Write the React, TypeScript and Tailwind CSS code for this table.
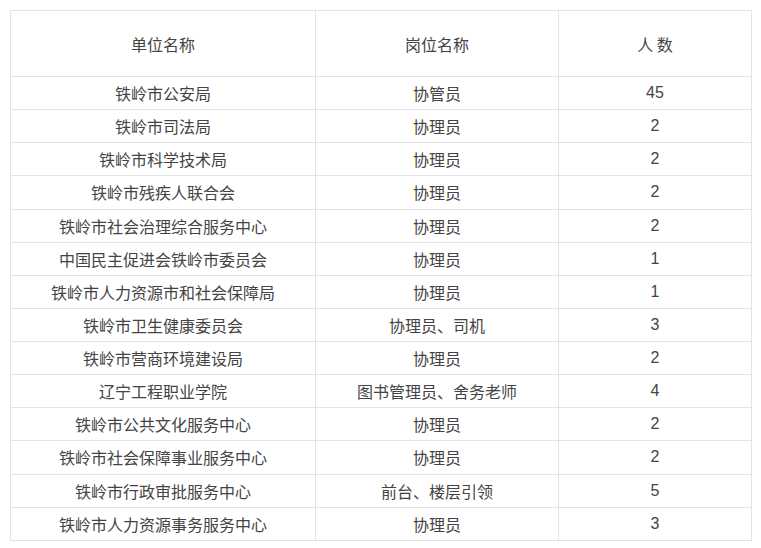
import React from 'react'

const rows: [string, string, string][] = [
  ['铁岭市公安局', '协管员', '45'],
  ['铁岭市司法局', '协理员', '2'],
  ['铁岭市科学技术局', '协理员', '2'],
  ['铁岭市残疾人联合会', '协理员', '2'],
  ['铁岭市社会治理综合服务中心', '协理员', '2'],
  ['中国民主促进会铁岭市委员会', '协理员', '1'],
  ['铁岭市人力资源市和社会保障局', '协理员', '1'],
  ['铁岭市卫生健康委员会', '协理员、司机', '3'],
  ['铁岭市营商环境建设局', '协理员', '2'],
  ['辽宁工程职业学院', '图书管理员、舍务老师', '4'],
  ['铁岭市公共文化服务中心', '协理员', '2'],
  ['铁岭市社会保障事业服务中心', '协理员', '2'],
  ['铁岭市行政审批服务中心', '前台、楼层引领', '5'],
  ['铁岭市人力资源事务服务中心', '协理员', '3'],
]

const cell = 'flex items-center justify-center border-r border-b border-[#e3e3e3]'

export default function App() {
  return (
    <div className="min-h-screen bg-white pt-[10px] pl-[10px] text-[#444] text-[16px] font-['Microsoft_YaHei','Noto_Sans_CJK_SC',sans-serif]">
      {/* 招聘岗位表 */}
      <div className="grid w-[742px] grid-cols-[305px_243px_193px] border-l border-t border-[#e3e3e3]">
        <div className={`${cell} h-[66px]`}>单位名称</div>
        <div className={`${cell} h-[66px]`}>岗位名称</div>
        <div className={`${cell} h-[66px]`}>人 数</div>
        {rows.map(([unit, post, num]) => (
          <React.Fragment key={unit}>
            <div className={`${cell} h-[33.14px]`}>{unit}</div>
            <div className={`${cell} h-[33.14px]`}>{post}</div>
            <div className={`${cell} h-[33.14px] font-['Liberation_Sans','Noto_Sans_CJK_SC',sans-serif]`}>{num}</div>
          </React.Fragment>
        ))}
      </div>
    </div>
  )
}
